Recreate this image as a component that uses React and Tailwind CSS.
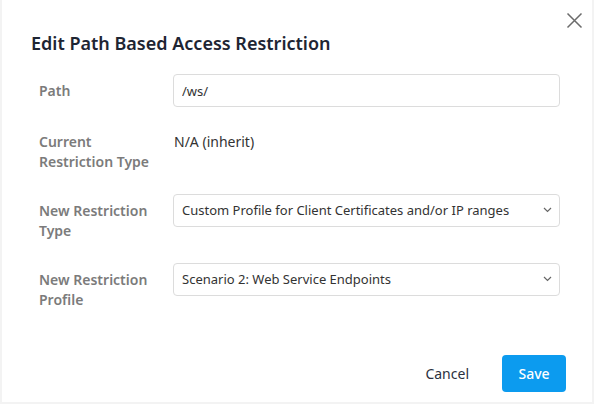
import React from 'react';

const Label = ({ children }) => (
    <div className="w-[134px] shrink-0 pt-[7px] text-[14px] leading-5 font-semibold text-[#7b7b7b]">
        {children}
    </div>
);

const Select = ({ value }) => (
    <div className="relative flex-1">
        <select
            defaultValue={value}
            className="w-full h-[33px] appearance-none rounded-[4px] border border-[#dcdcdc] bg-white pl-[8px] pr-8 text-[13px] text-[#333] focus:outline-none"
        >
            <option>{value}</option>
        </select>
        <svg className="absolute right-[8px] top-[13px] pointer-events-none" width="9" height="6" viewBox="0 0 9 6">
            <path d="M1 1l3.5 3.5L8 1" fill="none" stroke="#666" strokeWidth="1.2" />
        </svg>
    </div>
);

export default function App() {
    return (
        <div className="w-[594px] h-[404px] bg-[#f3f3f3] pl-[2px]" style={{ fontFamily: '"Noto Sans", "Open Sans", sans-serif' }}>
            <div className="relative w-[590px] h-[402px] bg-white flex flex-col">
                <button className="absolute right-[9px] top-[11px] w-[18px] h-[18px] flex items-center justify-center">
                    <svg width="17" height="17" viewBox="0 0 17 17">
                        <path d="M1.5 1.5l14 14M15.5 1.5l-14 14" stroke="#6b6b6b" strokeWidth="1.5" fill="none" />
                    </svg>
                </button>

                <h2 className="pl-[29px] pt-[31px] text-[18px] leading-6 font-semibold text-[#1e2533]">
                    Edit Path Based Access Restriction
                </h2>

                <div className="pl-[37px] pr-[32px] mt-[19px] flex flex-col">
                    <div className="flex items-start">
                        <Label>Path</Label>
                        <input
                            defaultValue="/ws/"
                            className="flex-1 h-[33px] rounded-[4px] border border-[#dcdcdc] px-[8px] text-[13px] text-[#333] focus:outline-none"
                        />
                    </div>

                    <div className="flex items-start mt-[18px]">
                        <Label>Current<br />Restriction Type</Label>
                        <div className="pt-[7px] pl-px text-[14px] leading-5 text-[#333]">N/A (inherit)</div>
                    </div>

                    <div className="flex items-start mt-[22px]">
                        <Label>New Restriction<br />Type</Label>
                        <Select value="Custom Profile for Client Certificates and/or IP ranges" />
                    </div>

                    <div className="flex items-start mt-[22px]">
                        <Label>New Restriction<br />Profile</Label>
                        <Select value="Scenario 2: Web Service Endpoints" />
                    </div>
                </div>

                <div className="mt-auto mb-[10px] pr-[26px] flex justify-end items-center gap-[17px]">
                    <button className="px-4 h-[37px] text-[14px] text-[#2b3140]">Cancel</button>
                    <button className="w-[64px] h-[37px] rounded-[4px] bg-[#0c9bef] text-[14px] font-medium text-white">Save</button>
                </div>
            </div>
        </div>
    );
}
